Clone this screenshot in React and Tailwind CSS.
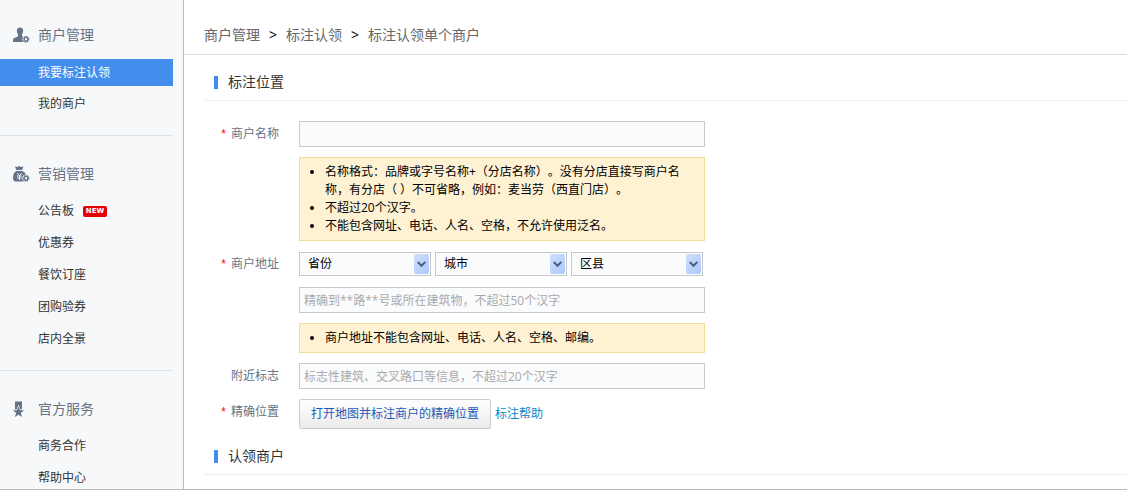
const navGroups = [
  { title: "商户管理", icon: "user", items: [{ label: "我要标注认领", active: true }, { label: "我的商户" }] },
  {
    title: "营销管理",
    icon: "money",
    items: [{ label: "公告板", isNew: true }, { label: "优惠券" }, { label: "餐饮订座" }, { label: "团购验券" }, { label: "店内全景" }],
  },
  { title: "官方服务", icon: "medal", items: [{ label: "商务合作" }, { label: "帮助中心" }] },
];

function Gear() {
  return (
    <g>
      <circle cx="13" cy="12.300" r="3.700" fill="#f6f8fa" />
      <circle cx="13" cy="12.300" r="1.900" fill="none" stroke="#667386" strokeWidth="1.400" />
      <circle cx="13" cy="12.300" r="2.900" fill="none" stroke="#667386" strokeWidth="1.200" strokeDasharray="1.14 1.14" />
    </g>
  );
}

function NavIcon({ name }) {
  return (
    <svg width="17" height="17" viewBox="0 0 17 17" fill="#667386" aria-hidden="true" className="shrink-0">
      {name === "user" && (
        <>
          <path d="M7 0.5c2 0 3.2 1.300 3.200 3.300 0 1.500-.6 2.700-1.200 3.500v1.600c1 .9 3.500 1.300 4.500 2.300V15H0v-1.800c0-1.300.8-2 2.200-2.600 1.300-.5 2.300-.9 2.800-1.700V7.300C4.400 6.500 3.800 5.300 3.800 3.800 3.800 1.800 5 .5 7 .5z" />
          <Gear />
        </>
      )}
      {name === "money" && (
        <>
          <path d="M2 0.600l2.300.5L6.200 0l1.900 1.100 2.300-.5L9.200 4H3.200z" />
          <path d="M3.200 5h6.200c2.600 1.500 4.400 3.500 4.400 6.500 0 2.500-1 4-3 4H2.800C.8 15.500 0 14 0 11.800 0 8.900 1 6.500 3.200 5z" />
          <path d="M4.300 7l2.200 2.500L8.700 7M4 10h5M4 12h5M6.500 9.500V14" fill="none" stroke="#f6f8fa" strokeWidth="0.900" />
          <Gear />
        </>
      )}
      {name === "medal" && (
        <>
          <path d="M2 0.500h7v8H2z" />
          <path
            d="M5.500 5.200L7 9.200l4 .1-3.100 2.600 1.200 4.100-3.600-2.300L1.900 16l1.200-4.100L0 9.300l4-.1z"
            stroke="#f6f8fa"
            strokeWidth="1.200"
            paintOrder="stroke"
          />
        </>
      )}
    </svg>
  );
}

function NewBadge() {
  return (
    <span className="ml-[9px] flex h-[11px] w-6 items-center justify-center rounded-xs bg-[#e60000] font-['DejaVu_Sans',sans-serif] text-[7px] leading-none font-bold text-white">
      NEW
    </span>
  );
}

function Sidebar() {
  return (
    <nav className="w-[184px] shrink-0 border-r border-[#b4bcc4] bg-[#f6f8fa] pt-[21px]">
      {navGroups.map((group, i) => (
        <section key={group.title} className={i ? "mr-2.5 border-t border-[#dde3ea] pt-6" : "mr-2.5"}>
          <h2 className="flex h-7 items-center pl-[13px] text-sm text-[#667386]">
            <span className="flex w-[25px]">
              <NavIcon name={group.icon} />
            </span>
            {group.title}
          </h2>
          <ul className={i === 0 ? "pt-2.5 pb-5" : i === 1 ? "flex flex-col gap-2.5 pt-3 pb-5" : "flex flex-col gap-2.5 pt-3"}>
            {group.items.map((item) => (
              <li key={item.label}>
                <a
                  href="#"
                  className={
                    item.active
                      ? "mb-[7px] flex h-[27px] items-center bg-[#438eed] pl-[38px] text-white"
                      : "flex h-[22px] items-center pl-[38px] text-[#333]"
                  }
                >
                  {item.label}
                  {item.isNew && <NewBadge />}
                </a>
              </li>
            ))}
          </ul>
        </section>
      ))}
    </nav>
  );
}

function SectionTitle({ children }) {
  return (
    <h2 className="ml-5 flex h-[37px] items-center gap-2.5 border-b border-[#eee] pl-2.5 text-sm text-[#333]">
      <span className="h-[13px] w-1 bg-[#438eed]" />
      {children}
    </h2>
  );
}

function Field({ id, label, required, children }) {
  return (
    <div className="flex items-start">
      <label htmlFor={id} className="w-[95px] pt-1 text-right leading-[18px] text-[#667386]">
        {required && <span className="mr-[5px] font-['Liberation_Sans',sans-serif] text-[#f00]">*</span>}
        {label}
      </label>
      <div className="ml-5 flex w-[406px] flex-col gap-2.5">{children}</div>
    </div>
  );
}

function TextInput(props) {
  return (
    <input
      type="text"
      className="h-[26px] w-full border border-[#c8c8c8] bg-[#fafbfd] px-1 text-black outline-none placeholder:text-[#aaa]"
      {...props}
    />
  );
}

function Select({ id, label }) {
  return (
    <div className="grid w-[132px] items-center">
      <select
        id={id}
        aria-label={label}
        className="col-start-1 row-start-1 h-6 appearance-none border border-[#c8c8c8] bg-[#fafbfd] pl-2 text-black outline-none"
      >
        <option>{label}</option>
      </select>
      <span className="pointer-events-none col-start-1 row-start-1 mr-0.5 flex h-5 w-[15px] items-center justify-center justify-self-end rounded-xs bg-linear-to-br from-[#d3e0fc] to-[#aac8fc]">
        <svg width="9" height="7" viewBox="0 0 9 7" fill="none" stroke="#4d6185" strokeWidth="2" aria-hidden="true">
          <path d="M0.700 1l3.800 3.800L8.300 1" />
        </svg>
      </span>
    </div>
  );
}

function Tips({ items }) {
  return (
    <ul className="list-disc border border-[#f0dc9c] bg-[#fff2d3] py-[5px] pr-5 pl-[25px] leading-[18px] text-black">
      {items.map((item) => (
        <li key={item}>{item}</li>
      ))}
    </ul>
  );
}

export default function App() {
  return (
    <div className="bg-white pb-[5px] font-['Open_Sans','Noto_Sans_CJK_SC',sans-serif] text-xs [text-spacing-trim:space-all]">
      <div className="flex border-b border-[#b4bcc4]">
        <Sidebar />
        <main className="min-w-0 grow">
          <div className="flex h-[55px] items-end gap-[9px] border-b border-[#d8dfe5] pb-[9px] pl-5 text-sm text-[#666]">
            <a href="#">商户管理</a>
            <span className="text-black">&gt;</span>
            <a href="#">标注认领</a>
            <span className="text-black">&gt;</span>
            <span>标注认领单个商户</span>
          </div>
          <form onSubmit={(e) => e.preventDefault()}>
            <div className="pt-[9px]">
              <SectionTitle>标注位置</SectionTitle>
            </div>
            <div className="flex flex-col gap-2.5 pt-5">
              <Field id="name" label="商户名称" required>
                <TextInput id="name" />
                <Tips
                  items={[
                    "名称格式：品牌或字号名称+（分店名称）。没有分店直接写商户名称，有分店（ ）不可省略，例如：麦当劳（西直门店）。",
                    "不超过20个汉字。",
                    "不能包含网址、电话、人名、空格，不允许使用泛名。",
                  ]}
                />
              </Field>
              <Field id="province" label="商户地址" required>
                <div className="flex gap-1 py-px">
                  <Select id="province" label="省份" />
                  <Select id="city" label="城市" />
                  <Select id="district" label="区县" />
                </div>
                <TextInput aria-label="详细地址" placeholder="精确到**路**号或所在建筑物，不超过50个汉字" />
                <Tips items={["商户地址不能包含网址、电话、人名、空格、邮编。"]} />
              </Field>
              <Field id="landmark" label="附近标志">
                <TextInput id="landmark" placeholder="标志性建筑、交叉路口等信息，不超过20个汉字" />
              </Field>
              <Field id="location" label="精确位置" required>
                <div className="flex items-center gap-1">
                  <button
                    id="location"
                    type="button"
                    className="h-[30px] w-48 rounded-xs border border-[#ccc] bg-linear-to-b from-white to-[#ebebeb] text-[#1c5bb8]"
                  >
                    打开地图并标注商户的精确位置
                  </button>
                  <a href="#" className="text-[#0088cc]">标注帮助</a>
                </div>
              </Field>
            </div>
            <div className="pt-[9px]">
              <SectionTitle>认领商户</SectionTitle>
            </div>
          </form>
        </main>
      </div>
    </div>
  );
}
